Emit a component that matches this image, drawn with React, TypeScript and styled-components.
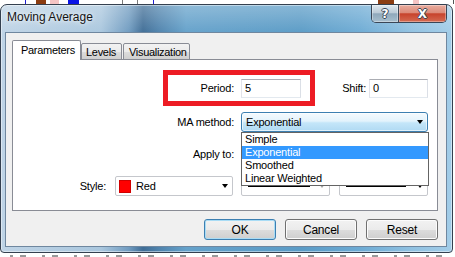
import React from "react";
import styled, { createGlobalStyle } from "styled-components";

const Global = createGlobalStyle`
  html, body { margin: 0; padding: 0; background: #ffffff; }
  body {
    width: 455px; height: 257px; overflow: hidden;
    font-family: "Liberation Sans", Arial, sans-serif;
    font-size: 11px; color: #000;
  }
`;

const Page = styled.div`
  width: 455px;
  height: 257px;
  display: flex;
  flex-direction: column;
  background: #ffffff;
`;

const ChartStrip = styled.svg`
  display: block;
  flex: none;
`;

const Window = styled.div`
  width: 453px;
  height: 249px;
  box-sizing: border-box;
  border: 1px solid #34404f;
  border-radius: 7px 7px 4px 4px;
  display: flex;
  flex-direction: column;
  flex: none;
  box-shadow: inset 0 0 0 1px rgba(255, 255, 255, 0.45);
  background:
    linear-gradient(to bottom, rgba(255, 255, 255, 0.28), rgba(255, 255, 255, 0) 30px),
    linear-gradient(to right, #bfd4e6 0px, #aac7de 100px, #6f9bc0 128px, #3f6d96 142px, #4f83ad 158px, #64a1ca 185px, #5a9bc6 300px, #6dabd4 360px, #90c1e1 410px, #a3cde8 453px);
`;

const TitleBar = styled.div`
  height: 27px;
  flex: none;
  display: flex;
  align-items: flex-start;
  padding-left: 6px;
`;

const Title = styled.div`
  margin-top: 5px;
  font-size: 12px;
  line-height: 15px;
  color: #141414;
  text-shadow: 0 0 6px rgba(255, 255, 255, 0.85), 0 0 3px rgba(255, 255, 255, 0.6);
`;

const CaptionButtons = styled.div`
  margin-left: auto;
  margin-right: 5px;
  display: flex;
  border: 1px solid #3a4656;
  border-top: none;
  border-radius: 0 0 5px 5px;
  overflow: hidden;
`;

const CaptionButton = styled.div<{ $close?: boolean }>`
  width: ${(p) => (p.$close ? 47 : 26)}px;
  height: 17px;
  display: flex;
  align-items: center;
  justify-content: center;
  font-family: "DejaVu Sans", sans-serif;
  font-weight: bold;
  font-size: 12px;
  color: #ffffff;
  text-shadow: 1px 0 0 #3a4656, -1px 0 0 #3a4656, 0 1px 0 #3a4656, 0 -1px 0 #3a4656;
  border-left: ${(p) => (p.$close ? "1px solid #3a4656" : "none")};
  box-shadow: inset 0 0 0 1px rgba(255, 255, 255, 0.35);
  background: ${(p) =>
    p.$close
      ? "linear-gradient(to bottom, #e9ada0 0%, #dc8b79 45%, #c7432c 52%, #d46b52 100%)"
      : "linear-gradient(to bottom, #dfe8ef 0%, #bccbd7 45%, #8fa8bb 52%, #a8bfce 100%)"};
`;

const Client = styled.div`
  flex: 1;
  margin: 0 5px 5px 4px;
  box-sizing: border-box;
  border: 1px solid #6f879f;
  background: #f0f0f0;
  padding: 7px 8px 0 6px;
  display: flex;
  flex-direction: column;
`;

const TabStrip = styled.div`
  display: flex;
  align-items: flex-end;
  height: 20px;
  position: relative;
  z-index: 2;
`;

const Tab = styled.div<{ $active?: boolean; $w: number; $pl: number; $ml?: number }>`
  box-sizing: border-box;
  width: ${(p) => p.$w}px;
  margin-left: ${(p) => p.$ml ?? 0}px;
  height: ${(p) => (p.$active ? 20 : 17)}px;
  padding-left: ${(p) => p.$pl}px;
  border: 1px solid #898c95;
  border-bottom: ${(p) => (p.$active ? "none" : "1px solid #898c95")};
  border-radius: 2px 2px 0 0;
  line-height: ${(p) => (p.$active ? 18 : 16)}px;
  white-space: nowrap;
  letter-spacing: -0.3px;
  background: ${(p) =>
    p.$active ? "#ffffff" : "linear-gradient(to bottom, #f2f2f2 0%, #ebebeb 50%, #dddddd 51%, #cfcfcf 100%)"};
`;

const Panel = styled.div`
  box-sizing: border-box;
  width: 426px;
  height: 152px;
  margin-top: -1px;
  background: #ffffff;
  border: 1px solid #898c95;
  padding-top: 10px;
  display: flex;
  flex-direction: column;
`;

const Row = styled.div<{ $mt: number; $ml?: number }>`
  display: flex;
  align-items: center;
  margin-top: ${(p) => p.$mt}px;
  margin-left: ${(p) => p.$ml ?? 0}px;
`;

const Highlight = styled.div`
  box-sizing: border-box;
  width: 152px;
  height: 36px;
  border: 5px solid #ed1c24;
  display: flex;
  align-items: center;
`;

const Label = styled.div<{ $w: number; $gap: number }>`
  flex: none;
  width: ${(p) => p.$w}px;
  margin-right: ${(p) => p.$gap}px;
  text-align: right;
  white-space: nowrap;
  letter-spacing: -0.2px;
`;

const TextInput = styled.div<{ $w: number }>`
  box-sizing: border-box;
  width: ${(p) => p.$w}px;
  height: 19px;
  background: #ffffff;
  border: 1px solid;
  border-color: #abadb3 #dbdfe6 #e3e9ef #e2e3ea;
  padding-left: 3px;
  line-height: 17px;
`;

const ComboWrap = styled.div<{ $w: number; $ml?: number }>`
  position: relative;
  flex: none;
  width: ${(p) => p.$w}px;
  margin-left: ${(p) => p.$ml ?? 0}px;
`;

const Combo = styled.div<{ $open?: boolean }>`
  box-sizing: border-box;
  height: 20px;
  display: flex;
  align-items: center;
  padding: 0 4px 0 ${(p) => (p.$open ? 4 : 3)}px;
  border: 1px solid ${(p) => (p.$open ? "#3c7fb1" : "#c5c7cc")};
  border-radius: ${(p) => (p.$open ? 3 : 2)}px;
  background: ${(p) =>
    p.$open
      ? "linear-gradient(to bottom, #f4fafe 0%, #e3f3fc 45%, #c4e6f9 55%, #b0daf3 100%)"
      : "#ffffff"};
  box-shadow: ${(p) => (p.$open ? "inset 0 0 0 1px rgba(255,255,255,0.6)" : "none")};
  letter-spacing: -0.2px;
`;

const ComboText = styled.span`
  flex: 1;
  white-space: nowrap;
`;

const Arrow = styled.span<{ $muted?: boolean }>`
  flex: none;
  margin-left: auto;
  width: 0;
  height: 0;
  border-left: 3.5px solid transparent;
  border-right: 3.5px solid transparent;
  border-top: 4px solid ${(p) => (p.$muted ? "#a2a2a2" : "#000")};
`;

const Swatch = styled.span<{ $color: string }>`
  flex: none;
  width: 12px;
  height: 13px;
  margin-right: 5px;
  background: ${(p) => p.$color};
  box-shadow: inset 0 0 0 1px rgba(120, 0, 0, 0.35);
`;

const LineSample = styled.span<{ $w: number }>`
  flex: none;
  width: ${(p) => p.$w}px;
  height: 1px;
  margin-left: 3px;
  margin-right: auto;
  background: #000;
`;

const DropList = styled.div`
  position: absolute;
  left: 0;
  top: 100%;
  width: 188px;
  box-sizing: border-box;
  border: 1px solid #646464;
  background: #ffffff;
  z-index: 5;
`;

const DropItem = styled.div<{ $sel?: boolean }>`
  height: 13px;
  line-height: 13px;
  padding-left: 3px;
  white-space: nowrap;
  letter-spacing: -0.2px;
  background: ${(p) => (p.$sel ? "#3399ff" : "transparent")};
  color: ${(p) => (p.$sel ? "#ffffff" : "#000")};
`;

const ButtonBar = styled.div`
  display: flex;
  justify-content: flex-end;
  gap: 9px;
  margin-top: 8px;
`;

const Button = styled.div<{ $default?: boolean }>`
  box-sizing: border-box;
  width: 72px;
  height: 21px;
  display: flex;
  align-items: center;
  justify-content: center;
  border: 1px solid ${(p) => (p.$default ? "#3c7fb1" : "#707070")};
  border-radius: 3px;
  background: linear-gradient(to bottom, #f2f2f2 0%, #ebebeb 50%, #dddddd 51%, #cfcfcf 100%);
  box-shadow: inset 0 0 0 1px ${(p) => (p.$default ? "#a9dcf5" : "#fcfcfc")};
  font-size: 12px;
  letter-spacing: -0.2px;
`;

const topMarks = [
  { x: 25, w: 1, c: "#1e1ed0" },
  { x: 36, w: 10, c: "#8b3d12" },
  { x: 50, w: 9, c: "#f4c4c4" },
  { x: 68, w: 11, c: "#0a14e6" },
  { x: 122, w: 1, c: "#7a7a7a" },
  { x: 137, w: 1, c: "#7a7a7a" },
  { x: 153, w: 1, c: "#1e1ed0" },
  { x: 378, w: 16, c: "#8b3d12" },
  { x: 413, w: 6, c: "#f4c4c4" },
  { x: 453, w: 1, c: "#555" },
];

const bottomMarks = Array.from({ length: 15 }, (_, i) => 10 + i * 32);

export default function App() {
  return (
    <>
      <Global />
      <Page>
        <ChartStrip width={455} height={4} viewBox="0 0 455 4">
          {topMarks.map((m) => (
            <rect key={m.x} x={m.x} y={0} width={m.w} height={4} fill={m.c} />
          ))}
        </ChartStrip>
        <Window>
          <TitleBar>
            <Title>Moving Average</Title>
            <CaptionButtons>
              <CaptionButton>?</CaptionButton>
              <CaptionButton $close>X</CaptionButton>
            </CaptionButtons>
          </TitleBar>
          <Client>
            <TabStrip>
              <Tab $active $w={69} $pl={8}>Parameters</Tab>
              <Tab $w={41} $pl={4}>Levels</Tab>
              <Tab $w={67} $pl={5} $ml={1}>Visualization</Tab>
            </TabStrip>
            <Panel>
              <Row $mt={0} $ml={150}>
                <Highlight>
                  <Label $w={66} $gap={7}>Period:</Label>
                  <TextInput $w={60}>5</TextInput>
                </Highlight>
                <Label $w={51} $gap={3}>Shift:</Label>
                <TextInput $w={59}>0</TextInput>
              </Row>
              <Row $mt={6}>
                <Label $w={221} $gap={7}>MA method:</Label>
                <ComboWrap $w={187}>
                  <Combo $open>
                    <ComboText>Exponential</ComboText>
                    <Arrow />
                  </Combo>
                  <DropList>
                    <DropItem>Simple</DropItem>
                    <DropItem $sel>Exponential</DropItem>
                    <DropItem>Smoothed</DropItem>
                    <DropItem>Linear Weighted</DropItem>
                  </DropList>
                </ComboWrap>
              </Row>
              <Row $mt={12}>
                <Label $w={221} $gap={7}>Apply to:</Label>
                <ComboWrap $w={187}>
                  <Combo>
                    <Arrow />
                  </Combo>
                </ComboWrap>
              </Row>
              <Row $mt={12}>
                <Label $w={93} $gap={9}>Style:</Label>
                <ComboWrap $w={118}>
                  <Combo>
                    <Swatch $color="#ff0000" />
                    <ComboText>Red</ComboText>
                    <Arrow />
                  </Combo>
                </ComboWrap>
                <ComboWrap $w={89} $ml={8}>
                  <Combo>
                    <LineSample $w={62} />
                    <Arrow $muted />
                  </Combo>
                </ComboWrap>
                <ComboWrap $w={89} $ml={9}>
                  <Combo>
                    <LineSample $w={60} />
                    <Arrow />
                  </Combo>
                </ComboWrap>
              </Row>
            </Panel>
            <ButtonBar>
              <Button $default>OK</Button>
              <Button>Cancel</Button>
              <Button>Reset</Button>
            </ButtonBar>
          </Client>
        </Window>
        <ChartStrip width={455} height={4} viewBox="0 0 455 4">
          {bottomMarks.map((x) => (
            <g key={x} fill="#9a9a9a">
              <rect x={x} y={2} width={3} height={2} />
              <rect x={x + 10} y={2} width={6} height={2} />
            </g>
          ))}
        </ChartStrip>
      </Page>
    </>
  );
}
